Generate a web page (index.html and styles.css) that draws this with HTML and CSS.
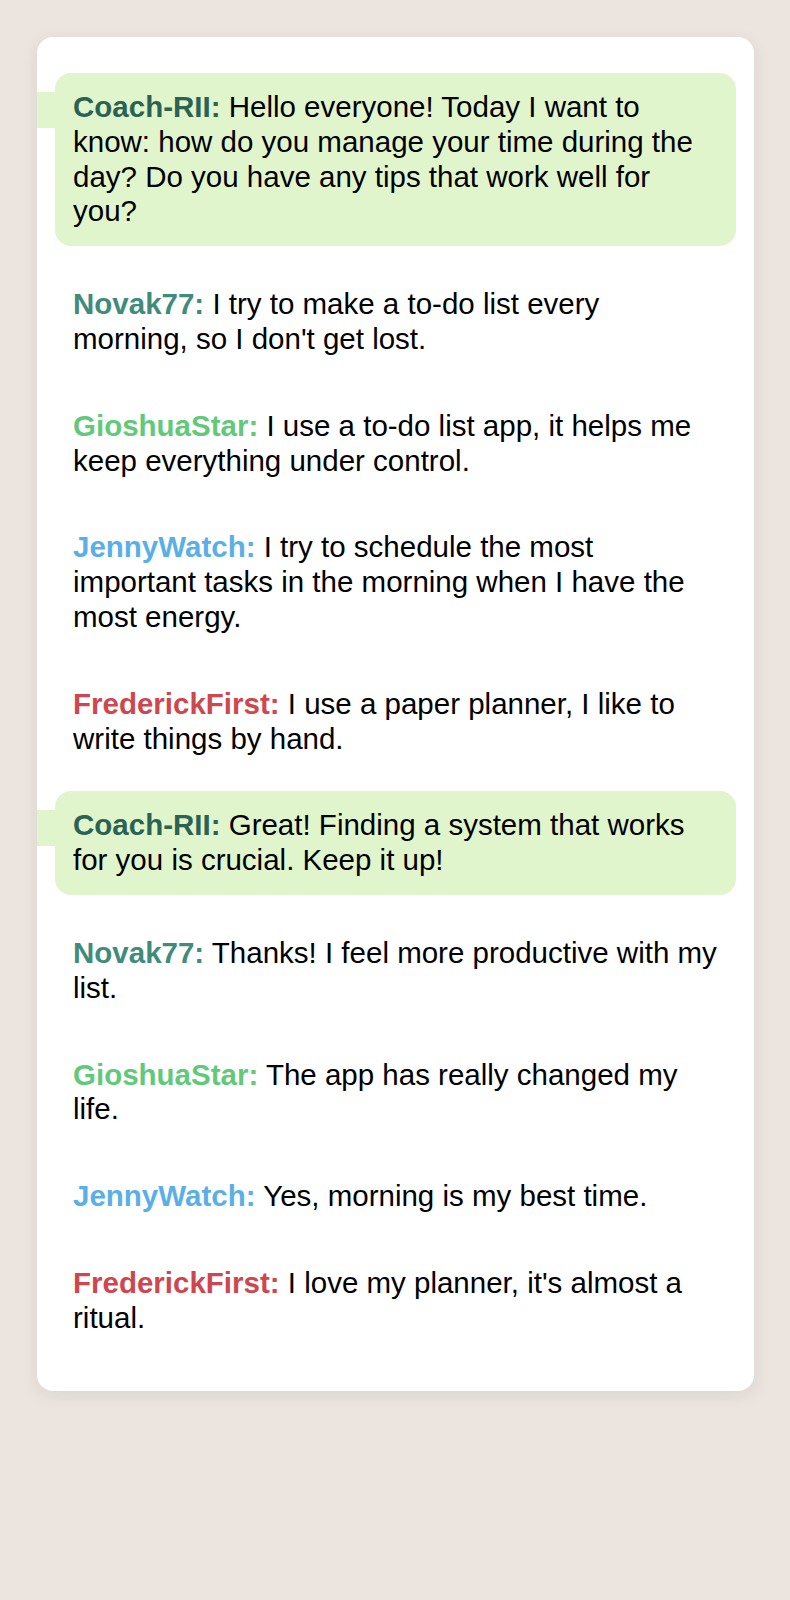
FILE: index.html
```html
<!DOCTYPE html>
<html lang="en">
<head>
<meta charset="utf-8">
<title>Chat</title>
<link rel="stylesheet" href="styles.css">
</head>
<body>
<div class="card">
  <div class="msg coach"><span class="name n-coach">Coach-RII:</span> Hello everyone! Today I want to know: how do you manage your time during the day? Do you have any tips that work well for you?</div>
  <div class="msg"><span class="name n-novak">Novak77:</span> I try to make a to-do list every morning, so I don't get lost.</div>
  <div class="msg"><span class="name n-giosh">GioshuaStar:</span> I use a to-do list app, it helps me keep everything under control.</div>
  <div class="msg"><span class="name n-jenny">JennyWatch:</span> I try to schedule the most important tasks in the morning when I have the most energy.</div>
  <div class="msg"><span class="name n-fred">FrederickFirst:</span> I use a paper planner, I like to write things by hand.</div>
  <div class="msg coach"><span class="name n-coach">Coach-RII:</span> Great! Finding a system that works for you is crucial. Keep it up!</div>
  <div class="msg"><span class="name n-novak">Novak77:</span> Thanks! I feel more productive with my list.</div>
  <div class="msg"><span class="name n-giosh">GioshuaStar:</span> The app has really changed my life.</div>
  <div class="msg"><span class="name n-jenny">JennyWatch:</span> Yes, morning is my best time.</div>
  <div class="msg"><span class="name n-fred">FrederickFirst:</span> I love my planner, it's almost a ritual.</div>
</div>
</body>
</html>
```
FILE: styles.css
```css
html, body {
  margin: 0;
  background: #ece5df;
}
body {
  padding: 37px 36px 37px 37px;
  font-family: "Liberation Sans", Arial, sans-serif;
  min-height: 1600px;
  box-sizing: border-box;
}
.card {
  background: #ffffff;
  border-radius: 16px;
  box-shadow: 0 4px 18px rgba(0, 0, 0, 0.08);
  padding: 36px 18px 38px;
  display: flex;
  flex-direction: column;
  gap: 18px;
}
.msg {
  position: relative;
  font-size: 29.5px;
  line-height: 34.8px;
  color: #000;
  padding: 17px 18px;
}
.msg.coach {
  background: #e1f5cc;
  border-radius: 16px;
  margin-bottom: 6px;
}
.msg.coach::before {
  content: "";
  position: absolute;
  left: -18px;
  top: 19px;
  width: 18px;
  height: 36px;
  background: #e1f5cc;
}
.name {
  font-weight: bold;
}
.n-coach { color: #2a6353; }
.n-novak { color: #3f8b7c; }
.n-giosh { color: #62c97a; }
.n-jenny { color: #5aafe7; }
.n-fred { color: #cf474e; }
```
